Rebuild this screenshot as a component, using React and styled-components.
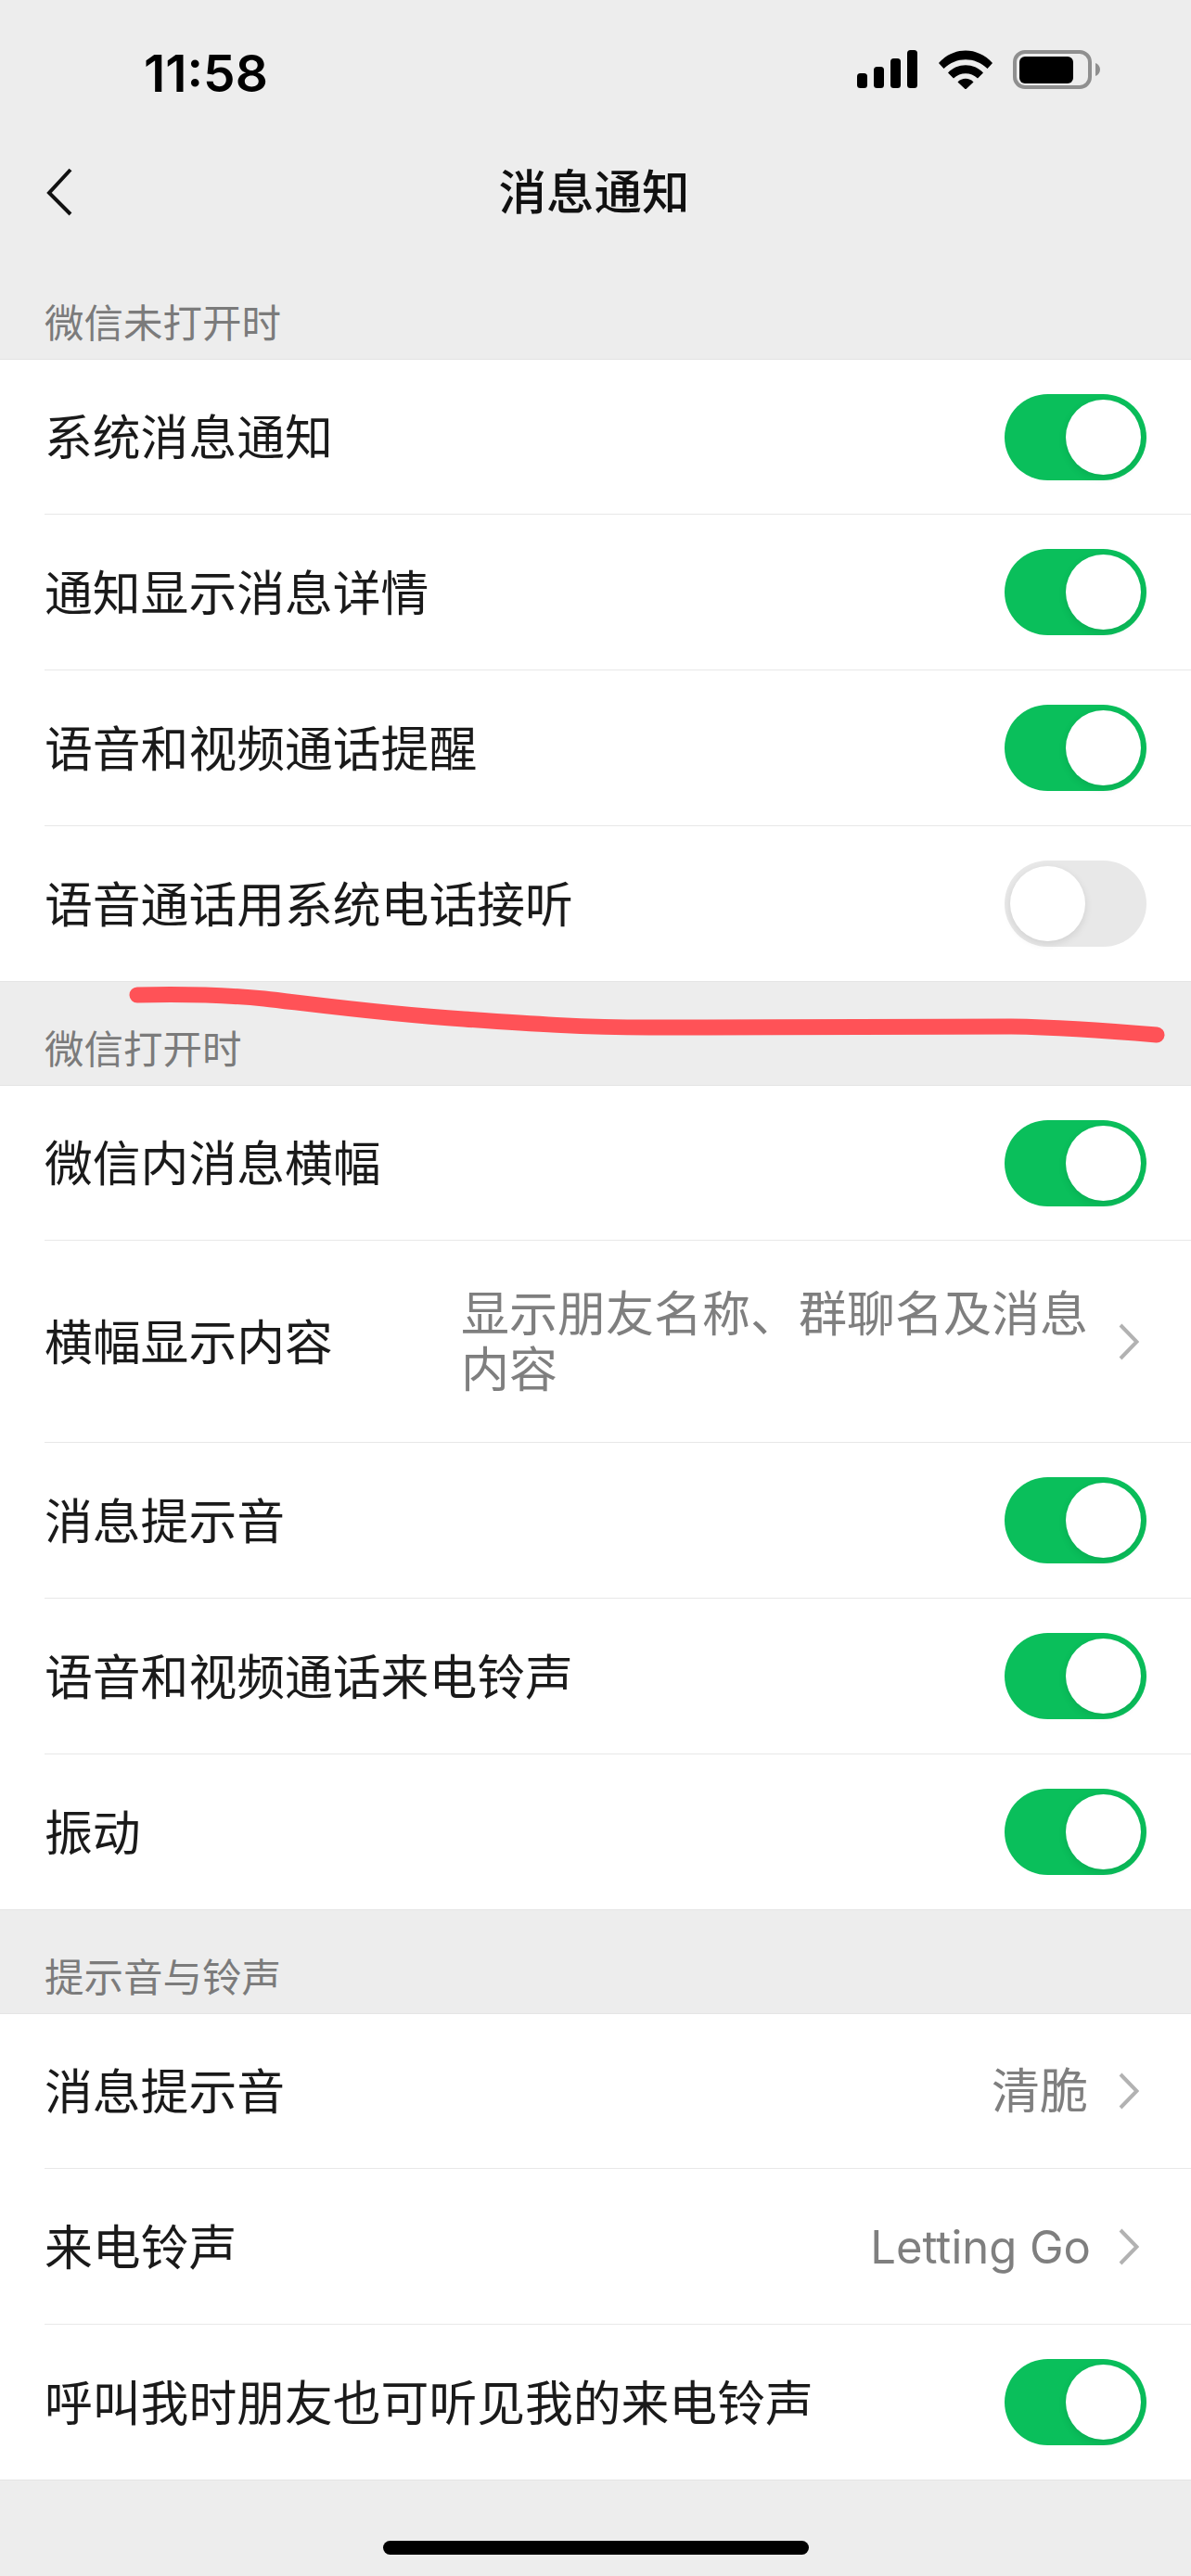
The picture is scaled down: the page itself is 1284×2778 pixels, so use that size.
import React from 'react'
import styled, { createGlobalStyle } from 'styled-components'

const GlobalStyle = createGlobalStyle`
  html, body { margin: 0; padding: 0; background: #ededed; }
  * { box-sizing: border-box; }
`

const CJK = `"Noto Sans CJK SC", "Noto Sans", sans-serif`

const Page = styled.div`
  position: relative;
  width: 1284px;
  height: 2778px;
  overflow: hidden;
  background: #ededed;
  display: flex;
  flex-direction: column;
  font-family: ${CJK};
  color: #1a1a1a;
`

const StatusBar = styled.div`
  height: 150px;
  padding: 54px 98px 0 155px;
  display: flex;
  justify-content: space-between;
  align-items: flex-start;
`

const Time = styled.span`
  padding-top: 3px;
  font-family: Inter, "Liberation Sans", sans-serif;
  font-size: 55px;
  font-weight: 600;
  line-height: 44px;
  color: #000;
`

const StatusIcons = styled.div`
  display: flex;
  align-items: center;
  gap: 22px;
`

const NavBar = styled.div`
  position: relative;
  height: 126px;
  display: flex;
  align-items: center;
  justify-content: center;
  padding-bottom: 18px;
`

const BackIcon = styled.svg`
  position: absolute;
  left: 48px;
  top: 30px;
`

const Title = styled.h1`
  margin: 0 3px 0 0;
  font-size: 51.5px;
  font-weight: 500;
  line-height: 64px;
  color: #111;
`

const SectionLabel = styled.div`
  height: 111px;
  padding-bottom: 12px;
  padding-left: 48px;
  display: flex;
  align-items: flex-end;
  font-size: 42.5px;
  line-height: 58px;
  color: #7b7b7b;
`

const Group = styled.div`
  background: #fff;
  border-top: 1px solid #e4e4e4;
  border-bottom: 1px solid #e4e4e4;
`

const Row = styled.div`
  padding-left: 48px;
`

const RowBody = styled.div`
  height: ${props => (props.$tall ? 218 : props.$first ? 166 : 168)}px;
  padding-right: 48px;
  display: flex;
  align-items: center;
  justify-content: space-between;
  border-top: ${props => (props.$first ? 'none' : '1px solid #e8e8e8')};
`

const Label = styled.span`
  flex-shrink: 0;
  padding-bottom: 4px;
  font-size: 51.8px;
  line-height: 64px;
  white-space: nowrap;
`

const Detail = styled.div`
  display: flex;
  align-items: center;
  gap: ${props => (props.$latin ? 30 : 33)}px;
  padding-right: 8px;
`

const Value = styled.span`
  max-width: ${props => (props.$wrap ? '676px' : 'none')};
  padding-top: 2px;
  font-family: Inter, ${CJK};
  font-size: ${props => (props.$latin ? 49 : 52)}px;
  line-height: 60px;
  color: #7f7f7f;
`

const Track = styled.span`
  width: 153px;
  height: 93px;
  padding: 6px;
  display: flex;
  justify-content: ${props => (props.$on ? 'flex-end' : 'flex-start')};
  border-radius: 47px;
  background: ${props => (props.$on ? '#0abf5b' : '#e8e8e8')};
`

const Knob = styled.span`
  width: 81px;
  height: 81px;
  border-radius: 50%;
  background: #fff;
  box-shadow: 0 3px 8px rgba(0, 0, 0, 0.1);
`

const HomeArea = styled.div`
  flex: 1;
  padding-top: 65px;
  display: flex;
  justify-content: center;
  align-items: flex-start;
`

const HomeBar = styled.div`
  width: 459px;
  height: 15px;
  margin-left: 1px;
  border-radius: 8px;
  background: #000;
`

const Scribble = styled.svg`
  position: absolute;
  left: 0;
  top: 1050px;
  pointer-events: none;
`

const Toggle = ({ on }) => (
  <Track $on={on}>
    <Knob />
  </Track>
)

const Chevron = () => (
  <svg width="22" height="40" viewBox="0 0 22 40" fill="none">
    <path d="M2 2 L19.5 20 L2 38" stroke="#b2b2b2" strokeWidth="4" />
  </svg>
)

const Signal = () => (
  <svg width="66" height="42" viewBox="0 0 66 42" fill="#000">
    <rect x="0" y="25" width="11" height="16" rx="3.5" />
    <rect x="18" y="18" width="11" height="23" rx="3.5" />
    <rect x="36" y="9" width="11" height="32" rx="3.5" />
    <rect x="54" y="0" width="11" height="41" rx="3.5" />
  </svg>
)

const Wifi = () => (
  <svg width="58" height="42" viewBox="0 0 58 42" fill="#000">
    <path d="M0 14 C16 -4 42 -4 58 14 L52.5 20 C39 7 19 7 5.5 20 Z" />
    <path d="M10 24.5 C20 13.5 38 13.5 48 24.5 L42 30.5 C34.5 23.5 23.5 23.5 16 30.5 Z" />
    <path d="M20.5 34.5 C25 29.5 33 29.5 37.5 34.5 L29 42.5 Z" />
  </svg>
)

const Battery = () => (
  <svg width="94" height="42" viewBox="0 0 94 42">
    <rect x="2" y="2" width="81" height="38" rx="11" fill="none" stroke="#8f8f8f" strokeWidth="4" />
    <rect x="7" y="7" width="58" height="29" rx="6" fill="#000" />
    <path d="M89 14 C92 15 94 18 94 21 C94 24 92 27 89 28 Z" fill="#8f8f8f" />
  </svg>
)

const sections = [
  {
    label: '微信未打开时',
    rows: [
      { text: '系统消息通知', on: true },
      { text: '通知显示消息详情', on: true },
      { text: '语音和视频通话提醒', on: true },
      { text: '语音通话用系统电话接听', on: false },
    ],
  },
  {
    label: '微信打开时',
    rows: [
      { text: '微信内消息横幅', on: true },
      { text: '横幅显示内容', value: '显示朋友名称、群聊名及消息内容', tall: true },
      { text: '消息提示音', on: true },
      { text: '语音和视频通话来电铃声', on: true },
      { text: '振动', on: true },
    ],
  },
  {
    label: '提示音与铃声',
    rows: [
      { text: '消息提示音', value: '清脆' },
      { text: '来电铃声', value: 'Letting Go', latin: true },
      { text: '呼叫我时朋友也可听见我的来电铃声', on: true },
    ],
  },
]

export default function App() {
  return (
    <Page>
      <GlobalStyle />
      <StatusBar>
        <Time>11:58</Time>
        <StatusIcons>
          <Signal />
          <Wifi />
          <Battery />
        </StatusIcons>
      </StatusBar>
      <NavBar>
        <BackIcon width="32" height="54" viewBox="0 0 32 54" fill="none">
          <path d="M28 3 L5 28 L28 51" stroke="#111" strokeWidth="4" />
        </BackIcon>
        <Title>消息通知</Title>
      </NavBar>

      {sections.map(section => (
        <div key={section.label}>
          <SectionLabel>{section.label}</SectionLabel>
          <Group>
            {section.rows.map((row, i) => (
              <Row key={row.text}>
                <RowBody $first={i === 0} $tall={row.tall}>
                  <Label>{row.text}</Label>
                  {row.value ? (
                    <Detail $latin={row.latin}>
                      <Value $wrap={row.tall} $latin={row.latin}>{row.value}</Value>
                      <Chevron />
                    </Detail>
                  ) : (
                    <Toggle on={row.on} />
                  )}
                </RowBody>
              </Row>
            ))}
          </Group>
        </div>
      ))}

      <HomeArea>
        <HomeBar />
      </HomeArea>

      {/* red pen mark drawn over the screenshot */}
      <Scribble width="1284" height="80" viewBox="0 0 1284 80" fill="none">
        <path
          d="M148 23 C195 22 245 23 285 27 C345 34 420 44 500 49 C570 54 630 58 700 58 C830 58 980 57 1090 57 C1150 58 1200 62 1247 66"
          stroke="#ff5257"
          strokeWidth="17"
          strokeLinecap="round"
        />
      </Scribble>
    </Page>
  )
}
